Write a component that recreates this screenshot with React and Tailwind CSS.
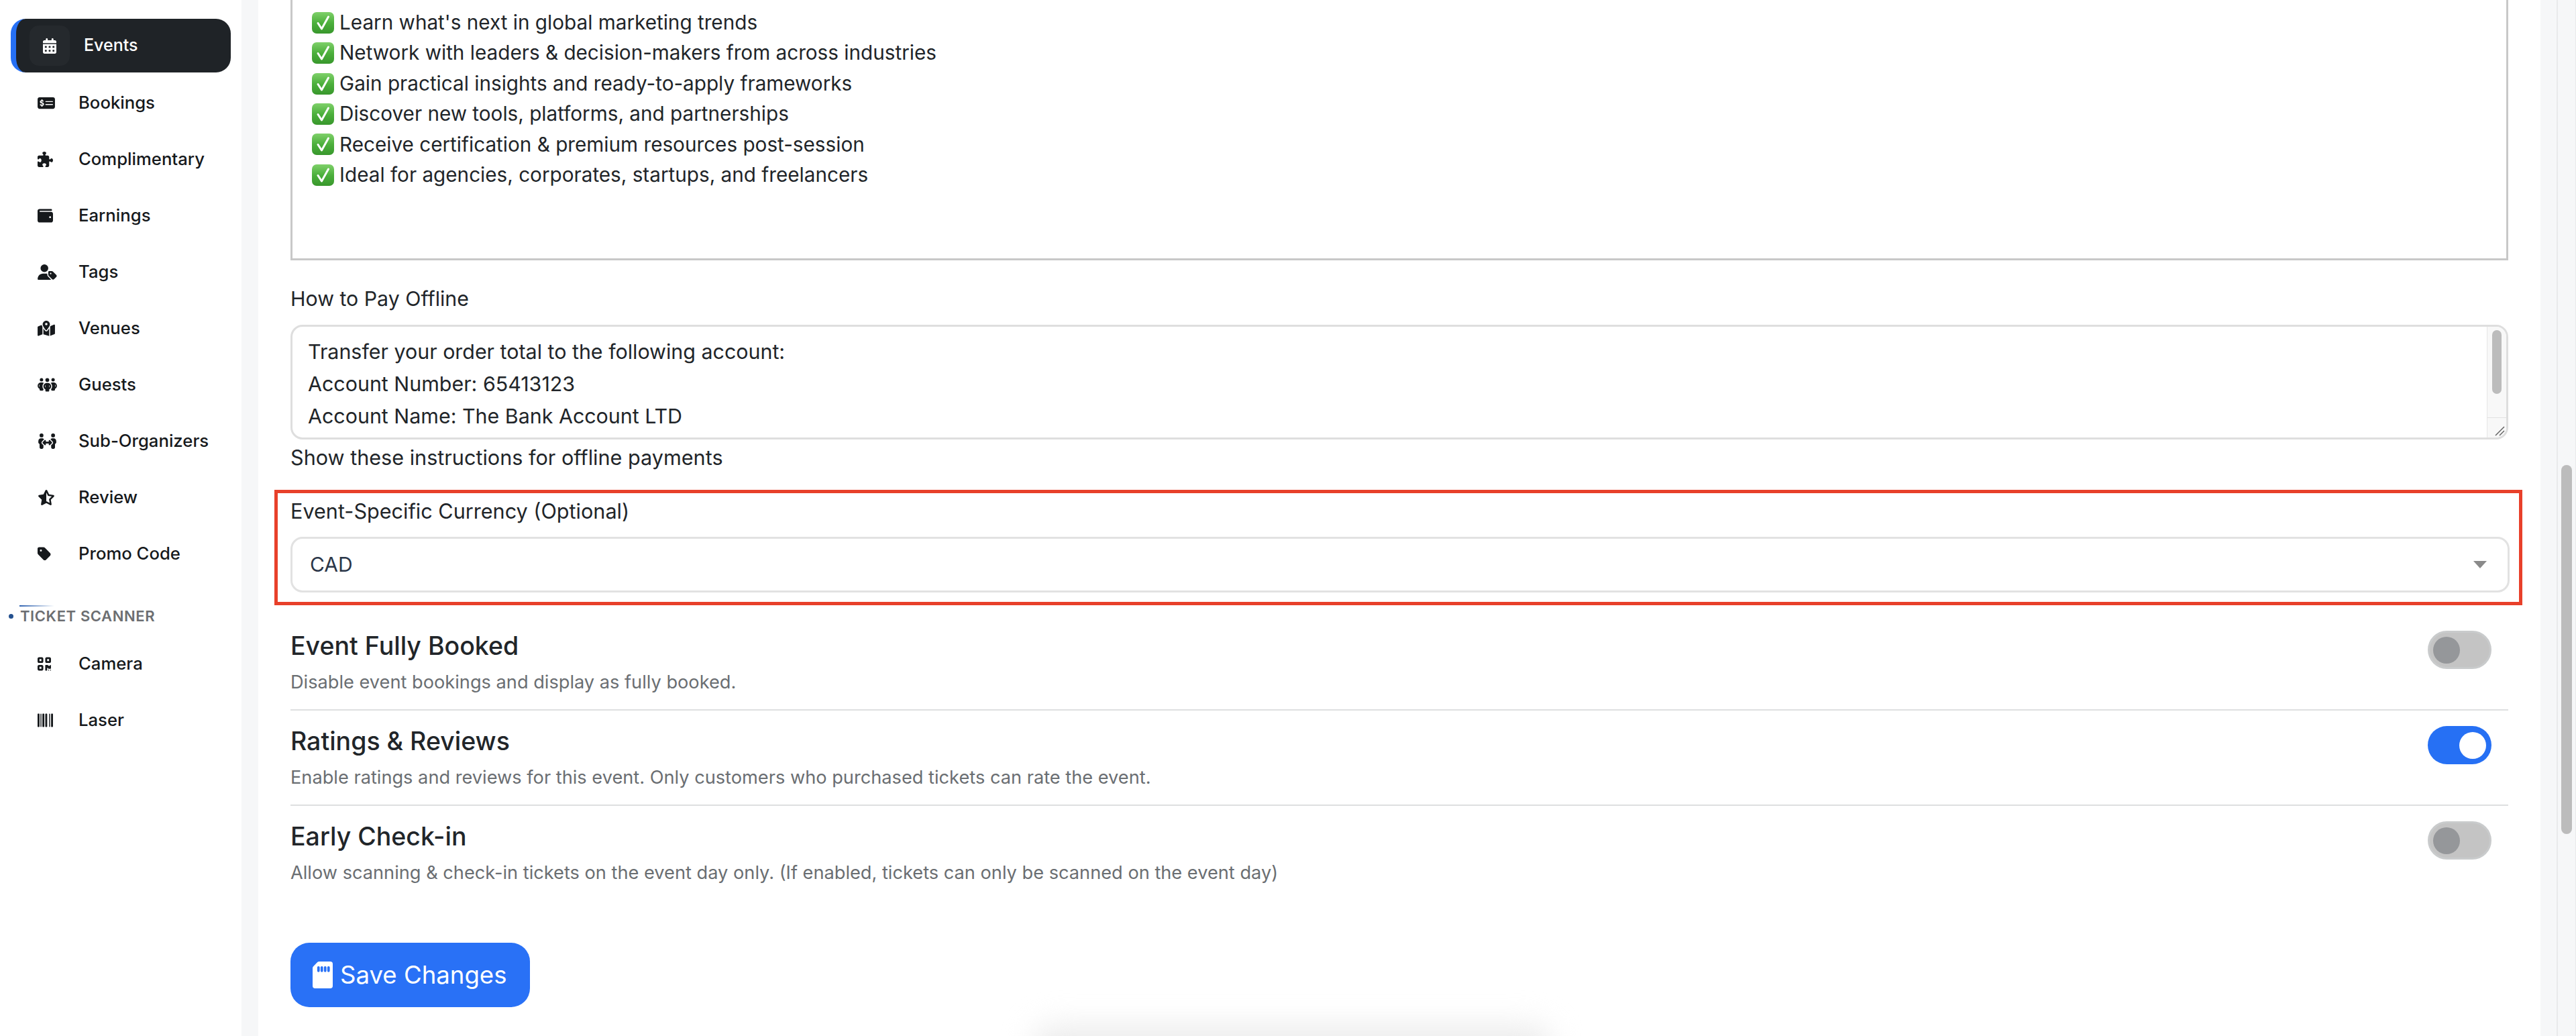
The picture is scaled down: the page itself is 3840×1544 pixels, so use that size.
import {
  FaBarcode,
  FaCalendarDays,
  FaMapLocationDot,
  FaMoneyCheckDollar,
  FaPeopleArrows,
  FaPeopleGroup,
  FaPuzzlePiece,
  FaQrcode,
  FaStarHalfStroke,
  FaTag,
  FaUserTag,
  FaWallet,
} from "react-icons/fa6";
import { BsSdCardFill } from "react-icons/bs";

const navItems = [
  { label: "Bookings", icon: FaMoneyCheckDollar, size: "h-[23px] w-[26px]" },
  { label: "Complimentary", icon: FaPuzzlePiece, size: "h-[23px] w-[23px]" },
  { label: "Earnings", icon: FaWallet, size: "h-[23px] w-[23px]" },
  { label: "Tags", icon: FaUserTag, size: "h-[23px] w-[29px]" },
  { label: "Venues", icon: FaMapLocationDot, size: "h-[23px] w-[26px]" },
  { label: "Guests", icon: FaPeopleGroup, size: "h-[23px] w-[29px]" },
  { label: "Sub-Organizers", icon: FaPeopleArrows, size: "h-[23px] w-[29px]" },
  { label: "Review", icon: FaStarHalfStroke, size: "h-[23px] w-[26px]" },
  { label: "Promo Code", icon: FaTag, size: "h-[23px] w-[20px]" },
];

const scannerItems = [
  { label: "Camera", icon: FaQrcode, size: "h-[23px] w-[20px]" },
  { label: "Laser", icon: FaBarcode, size: "h-[23px] w-[23px]" },
];

const benefits = [
  "Learn what's next in global marketing trends",
  "Network with leaders & decision-makers from across industries",
  "Gain practical insights and ready-to-apply frameworks",
  "Discover new tools, platforms, and partnerships",
  "Receive certification & premium resources post-session",
  "Ideal for agencies, corporates, startups, and freelancers",
];

const settings = [
  {
    title: "Event Fully Booked",
    text: "Disable event bookings and display as fully booked.",
    on: false,
  },
  {
    title: "Ratings & Reviews",
    text: "Enable ratings and reviews for this event. Only customers who purchased tickets can rate the event.",
    on: true,
  },
  {
    title: "Early Check-in",
    text: "Allow scanning & check-in tickets on the event day only. (If enabled, tickets can only be scanned on the event day)",
    on: false,
  },
];

const NavRow = ({ item }) => {
  const Icon = item.icon;
  return (
    <div className="flex h-[84px] items-center pl-[56px] text-[#16191c]">
      <span className="flex w-[61px] shrink-0 items-center">
        <Icon className={item.size} />
      </span>
      <span className="text-[25.7px] font-medium">{item.label}</span>
    </div>
  );
};

const CheckEmoji = () => (
  <svg viewBox="0 0 33 32" className="h-[32px] w-[33px] shrink-0">
    <defs>
      <linearGradient id="check-green" x1="0" y1="0" x2="0" y2="1">
        <stop offset="0" stopColor="#7fd06a" />
        <stop offset="0.5" stopColor="#4cb03c" />
        <stop offset="1" stopColor="#38972c" />
      </linearGradient>
    </defs>
    <rect x="0" y="0" width="33" height="32" rx="7" fill="url(#check-green)" />
    <path d="M9 16.5l5.5 8.5L24.5 7" fill="none" stroke="#fff" strokeWidth="3" strokeLinecap="round" strokeLinejoin="round" />
  </svg>
);

const Toggle = ({ on }) => (
  <div
    className={
      on
        ? "mt-[2px] flex h-[57px] w-[95px] shrink-0 items-center justify-end rounded-full bg-[#2670f4] px-[8px]"
        : "mt-[2px] flex h-[57px] w-[95px] shrink-0 items-center rounded-full border-[3px] border-[#c9cbcc] bg-[#c4c4c4] px-[5px]"
    }
  >
    <div className={on ? "size-[40px] rounded-full bg-white" : "size-[40px] rounded-full bg-[#95979a]"} />
  </div>
);

const App = () => {
  return (
    <div className="relative flex h-[1544px] w-[3840px] overflow-hidden bg-[#f6f7f8] font-['Inter',sans-serif] text-[#212529]">
      {/* Sidebar */}
      <aside className="w-[360px] shrink-0 bg-white pt-[28px]">
        <div className="mx-[16px] flex h-[80px] items-center rounded-[22px] border-l-[8px] border-[#2670f4] bg-[#1f2327] pl-[20px] text-white">
          <span className="flex size-[60px] items-center justify-center rounded-[14px] bg-[#25292d]">
            <FaCalendarDays className="h-[23px] w-[20px]" />
          </span>
          <span className="ml-[21px] text-[25px] font-medium">Events</span>
        </div>
        <div className="mt-[3px]">
          {navItems.map((item) => (
            <NavRow key={item.label} item={item} />
          ))}
        </div>
        <div className="relative mt-[39px] flex h-[24px] items-center pl-[13px]">
          <div className="absolute left-[29px] top-[-4px] h-[2px] w-[52px] bg-gradient-to-r from-[#2f62b0] to-transparent" />
          <span className="size-[7px] rounded-full bg-[#24518f]" />
          <span className="ml-[10px] text-[22px] font-semibold tracking-[0.6px] text-[#6c6e71]">TICKET SCANNER</span>
        </div>
        <div className="mt-[17px]">
          {scannerItems.map((item) => (
            <NavRow key={item.label} item={item} />
          ))}
        </div>
      </aside>

      {/* Main card */}
      <main className="ml-[25px] h-full w-[3402px] shrink-0 bg-white px-[48px]">
        <div className="h-[388px] border-x-[3px] border-b-[3px] border-[#c8c8c8] px-[29px] pt-[11px] text-[29.7px] leading-[45.4px]">
          {benefits.map((line) => (
            <div key={line} className="flex items-center gap-[8px]">
              <CheckEmoji />
              <span>{line}</span>
            </div>
          ))}
        </div>

        <div className="mt-[37px] text-[30.3px] leading-[40px]">How to Pay Offline</div>
        <div className="relative mt-[19px] h-[171px] overflow-hidden rounded-[18px] border-[3px] border-[#dedede] pl-[23px] pt-[13px] text-[30.4px] leading-[48px]">
          <div>Transfer your order total to the following account:</div>
          <div>Account Number: 65413123</div>
          <div>Account Name: The Bank Account LTD</div>
          {/* textarea scrollbar */}
          <div className="absolute inset-y-0 right-0 flex w-[29px] flex-col border-l border-[#e6e6e6] bg-[#f8f8f8]">
            <div className="flex-1 px-[7px] pt-[5px]">
              <div className="h-[95px] rounded-full bg-[#bcbcbc]" />
            </div>
            <div className="flex h-[30px] items-end justify-end border-t border-[#e2e2e2] p-[2px]">
              <svg viewBox="0 0 16 16" className="size-[16px]" stroke="#666" strokeWidth="1.5">
                <path d="M2 15L15 2M8 15l7-7" />
              </svg>
            </div>
          </div>
        </div>
        <div className="mt-[7px] text-[30.6px] leading-[40px]">Show these instructions for offline payments</div>

        <div className="relative mt-[40px] mr-[-2px]">
          <div className="absolute bottom-[-19px] left-[-24px] right-[-19px] top-[-12px] border-[5px] border-[#e8402a]" />
          <div className="text-[30.6px] leading-[40px]">Event-Specific Currency (Optional)</div>
          <div className="mt-[18px] flex h-[83px] items-center justify-between rounded-[18px] border-[3px] border-[#e2e2e2] pl-[26px] pr-[31px]">
            <span className="text-[30px] text-[#2b3648]">CAD</span>
            <svg viewBox="0 0 20 11" className="h-[11px] w-[20px]">
              <path d="M0 0h20L10 11z" fill="#8a8a8a" />
            </svg>
          </div>
        </div>

        <div className="mt-[34px]">
          {settings.map((row, idx) => (
            <div
              key={row.title}
              className={
                idx < 2
                  ? "flex h-[142px] items-start justify-between border-b-[2px] border-[#dedfe0] pr-[25px] pt-[21px]"
                  : "flex h-[142px] items-start justify-between pr-[25px] pt-[21px]"
              }
            >
              <div>
                <div className="text-[37.5px] font-medium leading-[50px]">{row.title}</div>
                <div className="mt-[9px] text-[27.2px] leading-[40px] text-[#6a6e72]">{row.text}</div>
              </div>
              <Toggle on={row.on} />
            </div>
          ))}
        </div>

        <button className="mt-[62px] flex h-[96px] w-[357px] items-center gap-[6px] rounded-[28px] bg-[#2971f6] pl-[28px] text-[36.6px] text-white">
          <BsSdCardFill size={40} />
          <span>Save Changes</span>
        </button>
      </main>

      {/* Page scrollbar */}
      <div className="ml-[24px] flex-1 border-x-[2px] border-[#e9eaeb] px-[5px] pt-[693px]">
        <div className="h-[550px] w-[16px] rounded-full bg-[#bcbcbc]" />
      </div>

      {/* Shadow of the floating bar below the fold */}
      <div className="absolute bottom-[-60px] left-[1540px] h-[76px] w-[772px] rounded-[30px] bg-[#ececec] blur-[22px]" />
    </div>
  );
};

export default App;
